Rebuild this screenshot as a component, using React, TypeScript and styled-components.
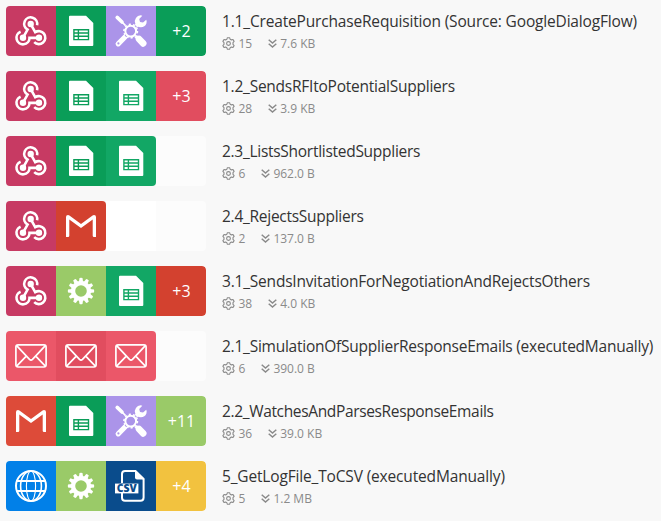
import React from 'react';
import styled, { createGlobalStyle } from 'styled-components';

const GlobalStyle = createGlobalStyle`
  * { box-sizing: border-box; }
  body { margin: 0; background: #f8f8f8; font-family: 'Open Sans', 'Noto Sans', sans-serif; }
`;

const List = styled.main`
  display: flex;
  flex-direction: column;
  gap: 15px;
  padding: 6px 0 10px 6px;
  height: 521px;
  overflow: hidden;
`;

const Row = styled.article`
  display: flex;
  gap: 16px;
  height: 50px;
  flex-shrink: 0;
`;

const Modules = styled.div`
  display: flex;
  width: 200px;
  flex-shrink: 0;
  border-radius: 4px;
  overflow: hidden;
`;

const Tile = styled.div<{ $color: string; $last?: boolean }>`
  display: flex;
  align-items: center;
  justify-content: center;
  width: 50px;
  height: 50px;
  background: ${(p) => p.$color};
  border-radius: ${(p) => (p.$last ? '0 4px 4px 0' : '0')};
  color: #fff;
`;

const Count = styled.span`
  font-size: 16px;
  line-height: 22px;
  padding-left: 1px;
`;

const Glyph = styled.svg`
  display: block;
  width: 32px;
  height: 32px;
  fill: none;
  stroke: #fff;
  overflow: visible;
`;

const Details = styled.div`
  display: flex;
  flex-direction: column;
  padding-top: 5px;
`;

const Title = styled.h2<{ $tracking: number }>`
  margin: 0;
  font-size: 15.5px;
  font-weight: 400;
  line-height: 21px;
  letter-spacing: ${(p) => p.$tracking}px;
  color: #333;
  white-space: nowrap;
`;

const Meta = styled.div`
  display: flex;
  align-items: center;
  gap: 15.5px;
  height: 16px;
  margin-top: 3.5px;
  font-size: 12px;
  line-height: 16px;
  color: #8a8a8a;
`;

const Stat = styled.span`
  display: flex;
  align-items: center;
  gap: 3.5px;
  white-space: nowrap;
`;

const Cog = styled.svg`
  width: 13px;
  height: 13px;
  fill: none;
  stroke: #8a8a8a;
  stroke-width: 1.1;
  stroke-linejoin: round;
`;

const Chevrons = styled.svg`
  width: 9px;
  height: 9px;
  fill: none;
  stroke: #8a8a8a;
  stroke-width: 1.5;
`;

const CsvLabel = styled.text`
  font-family: 'Open Sans', sans-serif;
  font-size: 10.5px;
  font-weight: 800;
  fill: #0a4c8c;
  stroke: none;
`;

const C = {
  hook: '#c73a63',
  sheet: '#0a9d58',
  sheetLight: '#12a765',
  tools: '#ab94e9',
  rose: '#e14d5f',
  pink: '#eb5769',
  gmail: '#dd4b39',
  gmailDark: '#d3412f',
  lime: '#9aca68',
  blue: '#0180e8',
  navy: '#0a4c8c',
  yellow: '#f2c23f',
  faint: '#fcfcfc',
  white: '#ffffff',
};

const Webhook = () => (
  <Glyph viewBox="0 0 32 32" strokeWidth="2.6">
    <path d="M22.1 10.2A6.5 6.5 0 1 0 12.6 14.6L8.2 22.4" />
    <path d="M5.6 16.8A6.5 6.5 0 1 0 14.5 22.9H24" />
    <path d="M19.2 27.2A6.5 6.5 0 1 0 20.2 17.2L15.7 9.2" />
    <g fill="#fff" stroke="none">
      <circle cx="15.7" cy="9" r="3.2" />
      <circle cx="8" cy="22.8" r="3.2" />
      <circle cx="24" cy="22.8" r="3.2" />
    </g>
  </Glyph>
);

const Sheet = ({ color }: { color: string }) => (
  <Glyph viewBox="0 0 32 32">
    <path
      d="M5 .8H21L28.3 8V30a1 1 0 0 1-1 1H5a1 1 0 0 1-1-1V1.8a1 1 0 0 1 1-1Z"
      fill="#fff"
      stroke="none"
    />
    <path d="M8.9 14.7H23.5V24.6H8.9ZM8.9 18H23.5M8.9 21.3H23.5M13.4 14.7V24.6" stroke={color} strokeWidth="1.4" />
  </Glyph>
);

const Tools = () => (
  <Glyph viewBox="0 0 32 32" strokeLinecap="round">
    <path d="M2.2 2.4 7 7" strokeWidth="3.6" />
    <path d="M7 7 11.5 11.7" strokeWidth="1.7" />
    <path d="M20 12 23.5 8.5" strokeWidth="3.8" />
    <path
      d="M25.6.3A6 6 0 0 0 20.2 8.2A6 6 0 0 0 31.4 8.4Q32 6.6 31.3 4.8L28 7.6 25 6.9 24.2 3.9 27.3.8Q26.5.3 25.6.3Z"
      fill="#fff"
      stroke="none"
    />
    <path d="M11 21 3.2 28.8" strokeWidth="5.2" />
    <circle cx="3.4" cy="28.4" r="1.1" fill={C.tools} stroke="none" />
    <path d="M19.5 20 23 23.4" strokeWidth="3.2" />
    <path d="M24 24 28.2 28.4" strokeWidth="6.6" />
    <circle cx="15.7" cy="16.1" r="7.4" fill={C.tools} stroke="none" />
    <circle cx="15.7" cy="16.1" r="5.4" strokeWidth="2" />
    <circle cx="15.7" cy="16.1" r="6.8" strokeWidth="1.5" strokeLinecap="butt" strokeDasharray="2.1 2.17" />
  </Glyph>
);

const Gear = () => (
  <Glyph viewBox="0 0 32 32">
    <circle cx="16" cy="16" r="8" strokeWidth="4.4" />
    {[0, 30, 60, 90, 120, 150, 180, 210, 240, 270, 300, 330].map((angle) => (
      <path
        key={angle}
        d="M13.9 7 14.5 3Q16 2.6 17.5 3L18.1 7Z"
        transform={`rotate(${angle} 16 16)`}
        fill="#fff"
        stroke="none"
      />
    ))}
  </Glyph>
);

const Gmail = () => (
  <Glyph viewBox="0 0 32 32">
    <path
      d="M1 27V7Q1 5 3 5Q3.8 5 4.4 5.5L16 14.1 27.6 5.5Q28.2 5 29 5Q31 5 31 7V27H29Q27.7 27 27.7 25.7V9.4L16 18 4.3 9.4V25.7Q4.3 27 3 27Z"
      fill="#fff"
      stroke="none"
    />
  </Glyph>
);

const Mail = () => (
  <Glyph viewBox="0 0 32 32" strokeWidth="1.7">
    <rect x=".9" y="4.9" width="30.2" height="22.1" rx="2.2" />
    <path d="M1.4 5.4 14.5 19.4Q16 20.8 17.5 19.4L30.6 5.4M1.4 26.4 11.3 16.2M30.6 26.4 20.7 16.2" />
  </Glyph>
);

const Globe = () => (
  <Glyph viewBox="0 0 32 32" strokeWidth="1.9">
    <circle cx="16" cy="16" r="15" strokeWidth="2" />
    <ellipse cx="16" cy="16" rx="10.4" ry="15" strokeWidth="1.6" />
    <ellipse cx="16" cy="16" rx="4.6" ry="15" strokeWidth="1.1" />
    <path d="M2 11H30M2 21H30" />
  </Glyph>
);

const Csv = () => (
  <Glyph viewBox="0 0 32 32">
    <path d="M7 13V4Q7 1 10 1H20.5L28.6 9V27.5Q28.6 30.8 25.4 30.8H10Q7 30.8 7 27.8V23" strokeWidth="2" />
    <path d="M20 .4 29.4 9.4H22Q20 9.4 20 7.4Z" fill="#fff" stroke="none" />
    <rect x="0" y="13.6" width="23.4" height="9.8" fill="#fff" stroke="none" />
    <CsvLabel x="1.8" y="22.3" textLength="20" lengthAdjust="spacingAndGlyphs">CSV</CsvLabel>
  </Glyph>
);

type Kind = 'hook' | 'sheet' | 'tools' | 'gear' | 'gmail' | 'mail' | 'globe' | 'csv';
type Cell = { color: string; icon?: Kind; count?: string };

const icons: Record<Kind, React.ComponentType<{ color: string }>> = {
  hook: Webhook,
  sheet: Sheet,
  tools: Tools,
  gear: Gear,
  gmail: Gmail,
  mail: Mail,
  globe: Globe,
  csv: Csv,
};

const icon = (color: string, kind: Kind): Cell => ({ color, icon: kind });
const more = (color: string, count: string): Cell => ({ color, count });
const empty = (color: string): Cell => ({ color });

const hook = icon(C.hook, 'hook');
const sheet = icon(C.sheet, 'sheet');
const sheetLight = icon(C.sheetLight, 'sheet');
const tools = icon(C.tools, 'tools');
const gear = icon(C.lime, 'gear');

type Scenario = { title: string; tracking: number; ops: string; size: string; cells: Cell[] };

const scenarios: Scenario[] = [
  {
    title: '1.1_CreatePurchaseRequisition (Source: GoogleDialogFlow)',
    tracking: -0.17, ops: '15', size: '7.6 KB',
    cells: [hook, sheet, tools, more(C.sheet, '+2')],
  },
  {
    title: '1.2_SendsRFItoPotentialSuppliers',
    tracking: -0.24, ops: '28', size: '3.9 KB',
    cells: [hook, sheet, sheetLight, more(C.rose, '+3')],
  },
  {
    title: '2.3_ListsShortlistedSuppliers',
    tracking: -0.28, ops: '6', size: '962.0 B',
    cells: [hook, sheet, sheetLight, empty(C.faint)],
  },
  {
    title: '2.4_RejectsSuppliers',
    tracking: -0.27, ops: '2', size: '137.0 B',
    cells: [hook, icon(C.gmailDark, 'gmail'), empty(C.white), empty(C.faint)],
  },
  {
    title: '3.1_SendsInvitationForNegotiationAndRejectsOthers',
    tracking: -0.2, ops: '38', size: '4.0 KB',
    cells: [hook, gear, sheetLight, more(C.gmailDark, '+3')],
  },
  {
    title: '2.1_SimulationOfSupplierResponseEmails (executedManually)',
    tracking: -0.24, ops: '6', size: '390.0 B',
    cells: [icon(C.pink, 'mail'), icon(C.rose, 'mail'), icon(C.pink, 'mail'), empty(C.faint)],
  },
  {
    title: '2.2_WatchesAndParsesResponseEmails',
    tracking: -0.35, ops: '36', size: '39.0 KB',
    cells: [icon(C.gmail, 'gmail'), sheet, tools, more(C.lime, '+11')],
  },
  {
    title: '5_GetLogFile_ToCSV (executedManually)',
    tracking: -0.16, ops: '5', size: '1.2 MB',
    cells: [icon(C.blue, 'globe'), gear, icon(C.navy, 'csv'), more(C.yellow, '+4')],
  },
];

const isEmpty = (cell?: Cell) => !cell || (!cell.icon && !cell.count);

export default function App() {
  return (
    <>
      <GlobalStyle />
      <List>
        {scenarios.map((s) => (
          <Row key={s.title}>
            <Modules>
              {s.cells.map((cell, i) => {
                const Icon = cell.icon && icons[cell.icon];
                return (
                  <Tile key={i} $color={cell.color} $last={!isEmpty(cell) && isEmpty(s.cells[i + 1])}>
                    {Icon && <Icon color={cell.color} />}
                    {cell.count && <Count>{cell.count}</Count>}
                  </Tile>
                );
              })}
            </Modules>
            <Details>
              <Title $tracking={s.tracking}>{s.title}</Title>
              <Meta>
                <Stat>
                  <Cog viewBox="0 0 13 13">
                    <path d="M5.4.7H7.6L8.1 2.2 9.4 2.9 11 2.5 12.1 4.4 11 5.7V7.3L12.1 8.6 11 10.5 9.4 10.1 8.1 10.8 7.6 12.3H5.4L4.9 10.8 3.6 10.1 2 10.5.9 8.6 2 7.3V5.7L.9 4.4 2 2.5 3.6 2.9 4.9 2.2Z" />
                    <circle cx="6.5" cy="6.5" r="1.9" />
                  </Cog>
                  {s.ops}
                </Stat>
                <Stat>
                  <Chevrons viewBox="0 0 9 9">
                    <path d="M.7.7 4.5 4 8.3.7M.7 4.7 4.5 8 8.3 4.7" />
                  </Chevrons>
                  {s.size}
                </Stat>
              </Meta>
            </Details>
          </Row>
        ))}
      </List>
    </>
  );
}
